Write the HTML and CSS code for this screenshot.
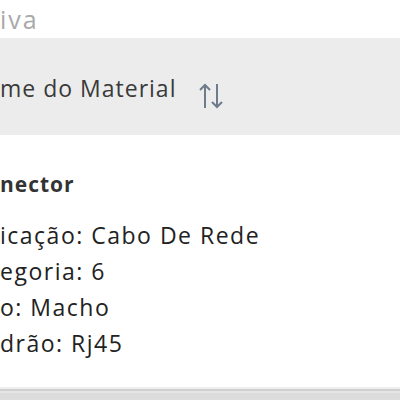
FILE: index.html
```html
<!DOCTYPE html>
<html lang="pt">
<head>
<meta charset="utf-8">
<link rel="stylesheet" href="styles.css">
</head>
<body>
<div class="page">
  <div class="caption">iva</div>
  <div class="thead">
    <span class="th-label">me do Material</span>
    <svg class="sort" width="28" height="28" viewBox="0 0 28 28" aria-hidden="true">
      <path d="M8 26 V3 M3 8 L8 3 L13 8" fill="none" stroke="#6d7b8a" stroke-width="2"/>
      <path d="M20 2 V25 M15 20 L20 25 L25 20" fill="none" stroke="#6d7b8a" stroke-width="2"/>
    </svg>
  </div>
  <div class="cell">
    <div class="title">nector</div>
    <ul class="specs">
      <li>icação: Cabo De Rede</li>
      <li>egoria: 6</li>
      <li>o: Macho</li>
      <li>drão: Rj45</li>
    </ul>
  </div>
  <div class="footer"></div>
</div>
</body>
</html>
```
FILE: styles.css
```css
html, body {
  margin: 0;
  padding: 0;
  background: #ffffff;
}
body {
  font-family: "Open Sans", Lato, sans-serif;
  width: 400px;
  height: 400px;
  overflow: hidden;
}
.page {
  display: flex;
  flex-direction: column;
  height: 400px;
}
.caption {
  height: 38px;
  font-size: 25px;
  line-height: 38px;
  color: #a9a9a9;
  letter-spacing: 2px;
}
.thead {
  height: 97px;
  background: #ececec;
  display: flex;
  align-items: center;
  gap: 21px;
  padding-top: 2px;
  box-sizing: border-box;
}
.th-label {
  font-size: 23px;
  letter-spacing: 1px;
  color: #3a3a3a;
}
.sort {
  margin-top: 16px;
}
.cell {
  flex: 1;
  padding-top: 36px;
  color: #222;
}
.title {
  font-weight: 700;
  font-size: 21px;
  letter-spacing: 1px;
  line-height: 26px;
  color: #333;
  margin-bottom: 20px;
}
.specs {
  list-style: none;
  margin: 0;
  padding: 0;
  font-size: 23px;
  letter-spacing: 1.5px;
  line-height: 36px;
}
.footer {
  height: 11px;
  background: #dcdcdc;
  border-top: 2px solid #eeeeee;
  box-shadow: inset 0 2px 0 #cfcfcf, inset 0 4px 0 #e6e6e6;
}
```
